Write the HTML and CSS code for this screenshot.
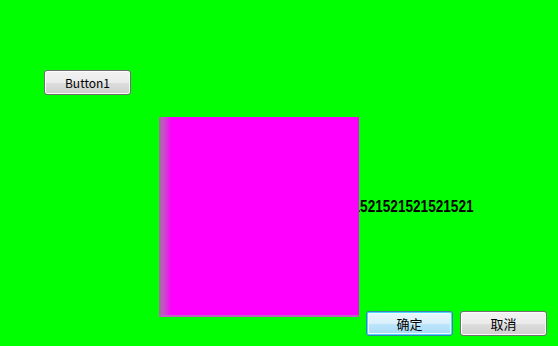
FILE: index.html
```html
<!DOCTYPE html>
<html lang="zh-CN">
<head>
  <meta charset="UTF-8">
  <title>Form1</title>
  <link rel="stylesheet" href="styles.css">
</head>
<body>
  <!-- Form surface: controls sit at their designer positions -->
  <div class="form">
    <button class="win-btn btn-one">Button1</button>
    <div class="label-text">521521521521521521521521</div>
    <div class="panel"></div>
    <div class="dialog-actions">
      <button class="win-btn default">确定</button>
      <button class="win-btn">取消</button>
    </div>
  </div>
</body>
</html>
```

FILE: styles.css
```css
/* Reset */
* {
  margin: 0;
  padding: 0;
  box-sizing: border-box;
}

body {
  width: 558px;
  height: 346px;
  background: #00ff00;
  overflow: hidden;
  font-family: "Noto Sans", "Noto Sans CJK SC", sans-serif;
}

.form {
  position: relative;
  width: 558px;
  height: 346px;
}

/* Windows 7 style push button */
.win-btn {
  width: 87px;
  height: 25px;
  border: 1px solid #707070;
  border-radius: 3px;
  background: linear-gradient(to bottom, #f2f2f2 0%, #ebebeb 50%, #dddddd 51%, #cfcfcf 100%);
  box-shadow: inset 0 0 0 1px #fcfcfc;
  font-family: "Noto Sans CJK SC", "Noto Sans", sans-serif;
  font-size: 12px;
  color: #000;
  line-height: 21px;
}

.win-btn.default {
  border-color: #3c7fb1;
  background: linear-gradient(to bottom, #eaf6fd 0%, #d9f0fc 50%, #bee6fd 51%, #a7d9f5 100%);
  box-shadow: inset 0 0 0 1px #48d8fd, inset 0 0 0 2px #f2fbfe;
}

.dialog-actions .win-btn {
  font-size: 13px;
}

.btn-one {
  position: absolute;
  left: 44px;
  top: 70px;
}

.label-text {
  position: absolute;
  right: 84px;
  top: 198px;
  font-family: "Liberation Sans", Arial, sans-serif;
  font-weight: bold;
  font-size: 16px;
  color: #000;
  transform: scaleX(0.85);
  transform-origin: right center;
}

.panel {
  position: absolute;
  left: 159px;
  top: 117px;
  width: 200px;
  height: 200px;
  background: linear-gradient(to right, #a070a0 0px, #c850c8 5px, #f010f0 11px, #ff00ff 13px);
  border-bottom: 2px solid #c060c0;
}

.dialog-actions {
  position: absolute;
  right: 11px;
  bottom: 10px;
  display: flex;
  gap: 7px;
}
```
